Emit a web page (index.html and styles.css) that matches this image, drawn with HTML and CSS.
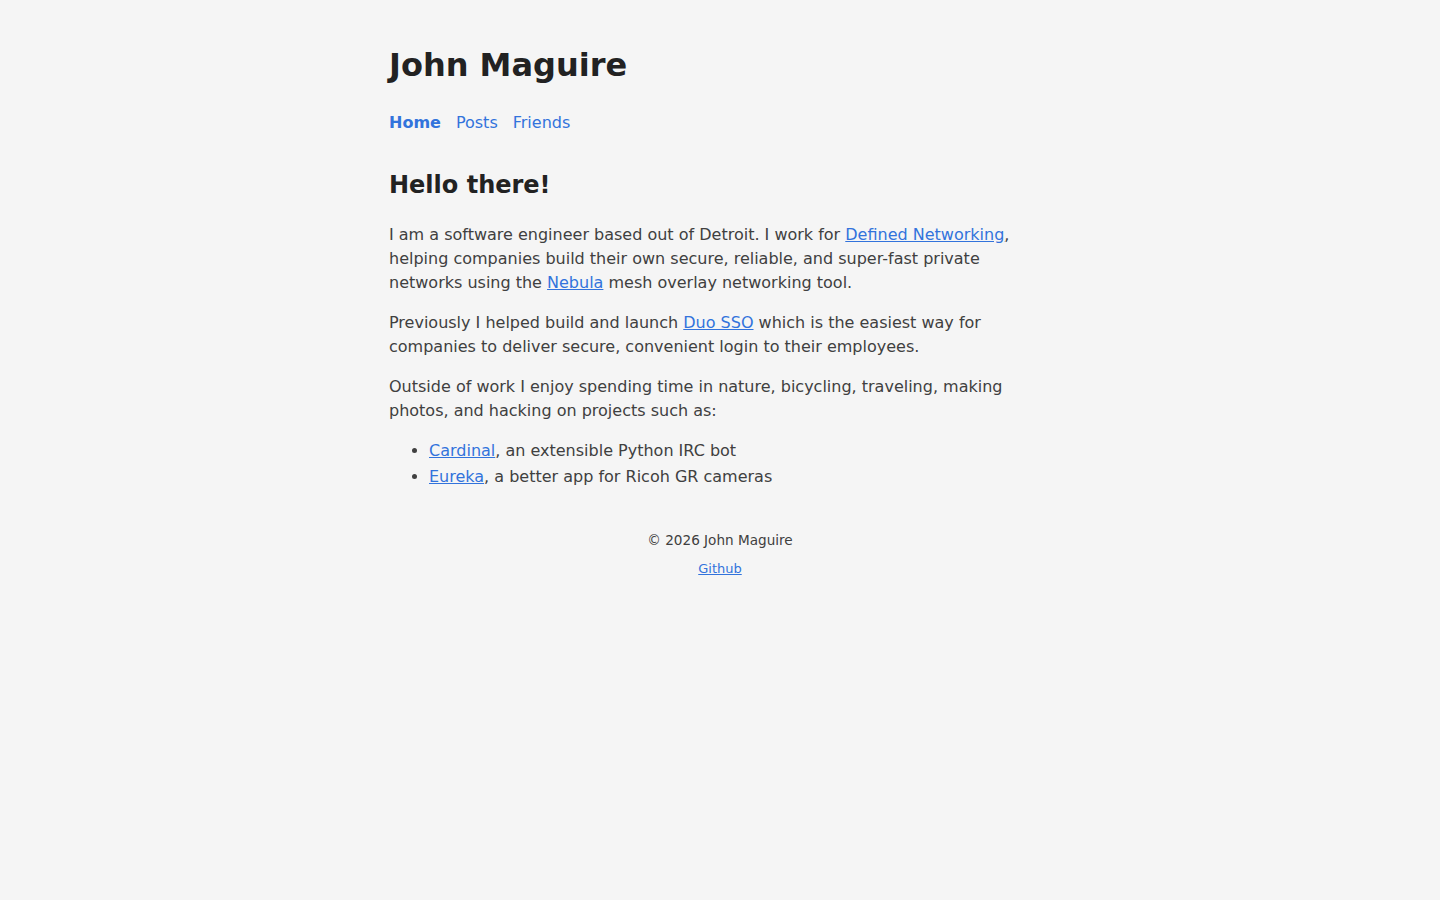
FILE: index.html
```html
<!DOCTYPE html>
<html lang="en">
<head>
<meta charset="utf-8">
<title>John Maguire</title>
<link rel="stylesheet" href="styles.css">
</head>
<body>
<div class="page">
  <header class="site-header">
    <h1 class="site-title">John Maguire</h1>
    <nav class="nav">
      <a class="nav-link active" href="#">Home</a>
      <a class="nav-link" href="#">Posts</a>
      <a class="nav-link" href="#">Friends</a>
    </nav>
  </header>
  <main class="content">
    <h2 class="heading">Hello there!</h2>
    <p>I am a software engineer based out of Detroit. I work for <a href="#">Defined Networking</a>, helping companies build their own secure, reliable, and super-fast private networks using the <a href="#">Nebula</a> mesh overlay networking tool.</p>
    <p>Previously I helped build and launch <a href="#">Duo SSO</a> which is the easiest way for companies to deliver secure, convenient login to their employees.</p>
    <p class="lead-in">Outside of work I enjoy spending time in nature, bicycling, traveling, making photos, and hacking on projects such as:</p>
    <ul class="projects">
      <li><a href="#">Cardinal</a>, an extensible Python IRC bot</li>
      <li><a href="#">Eureka</a>, a better app for Ricoh GR cameras</li>
    </ul>
  </main>
  <footer class="footer">
    <p class="copyright">© 2026 John Maguire</p>
    <p class="footer-links"><a href="#">Github</a></p>
  </footer>
</div>
</body>
</html>
```
FILE: styles.css
```css
html, body {
  margin: 0;
  padding: 0;
  background: #f5f5f5;
}
body {
  font-family: "DejaVu Sans", Verdana, sans-serif;
  font-size: 16px;
  line-height: 24px;
  color: #404040;
}
a {
  color: #3273dc;
}
.page {
  max-width: 662px;
  margin: 0 auto;
  padding-top: 41px;
}
.site-title {
  margin: 0;
  font-size: 32px;
  line-height: 48px;
  font-weight: bold;
  color: #222;
}
.nav {
  display: flex;
  gap: 15px;
  margin-top: 22px;
  line-height: 24px;
}
.nav-link {
  text-decoration: none;
  color: #3273dc;
}
.nav-link.active {
  font-weight: bold;
}
.content {
  margin-top: 34px;
}
.heading {
  margin: 0 0 22px;
  font-size: 24px;
  line-height: 32px;
  font-weight: bold;
  color: #222;
}
.content p {
  margin: 0 0 16px;
}
.content p.lead-in {
  margin-bottom: 15px;
}
.projects {
  margin: 0;
  padding-left: 40px;
}
.projects li {
  line-height: 26px;
}
.footer {
  margin-top: 40px;
  text-align: center;
}
.copyright {
  margin: 0;
  font-size: 13.6px;
  line-height: 20px;
  color: #404040;
}
.footer-links {
  margin: 10px 0 0;
  font-size: 13px;
  line-height: 18px;
}
```
